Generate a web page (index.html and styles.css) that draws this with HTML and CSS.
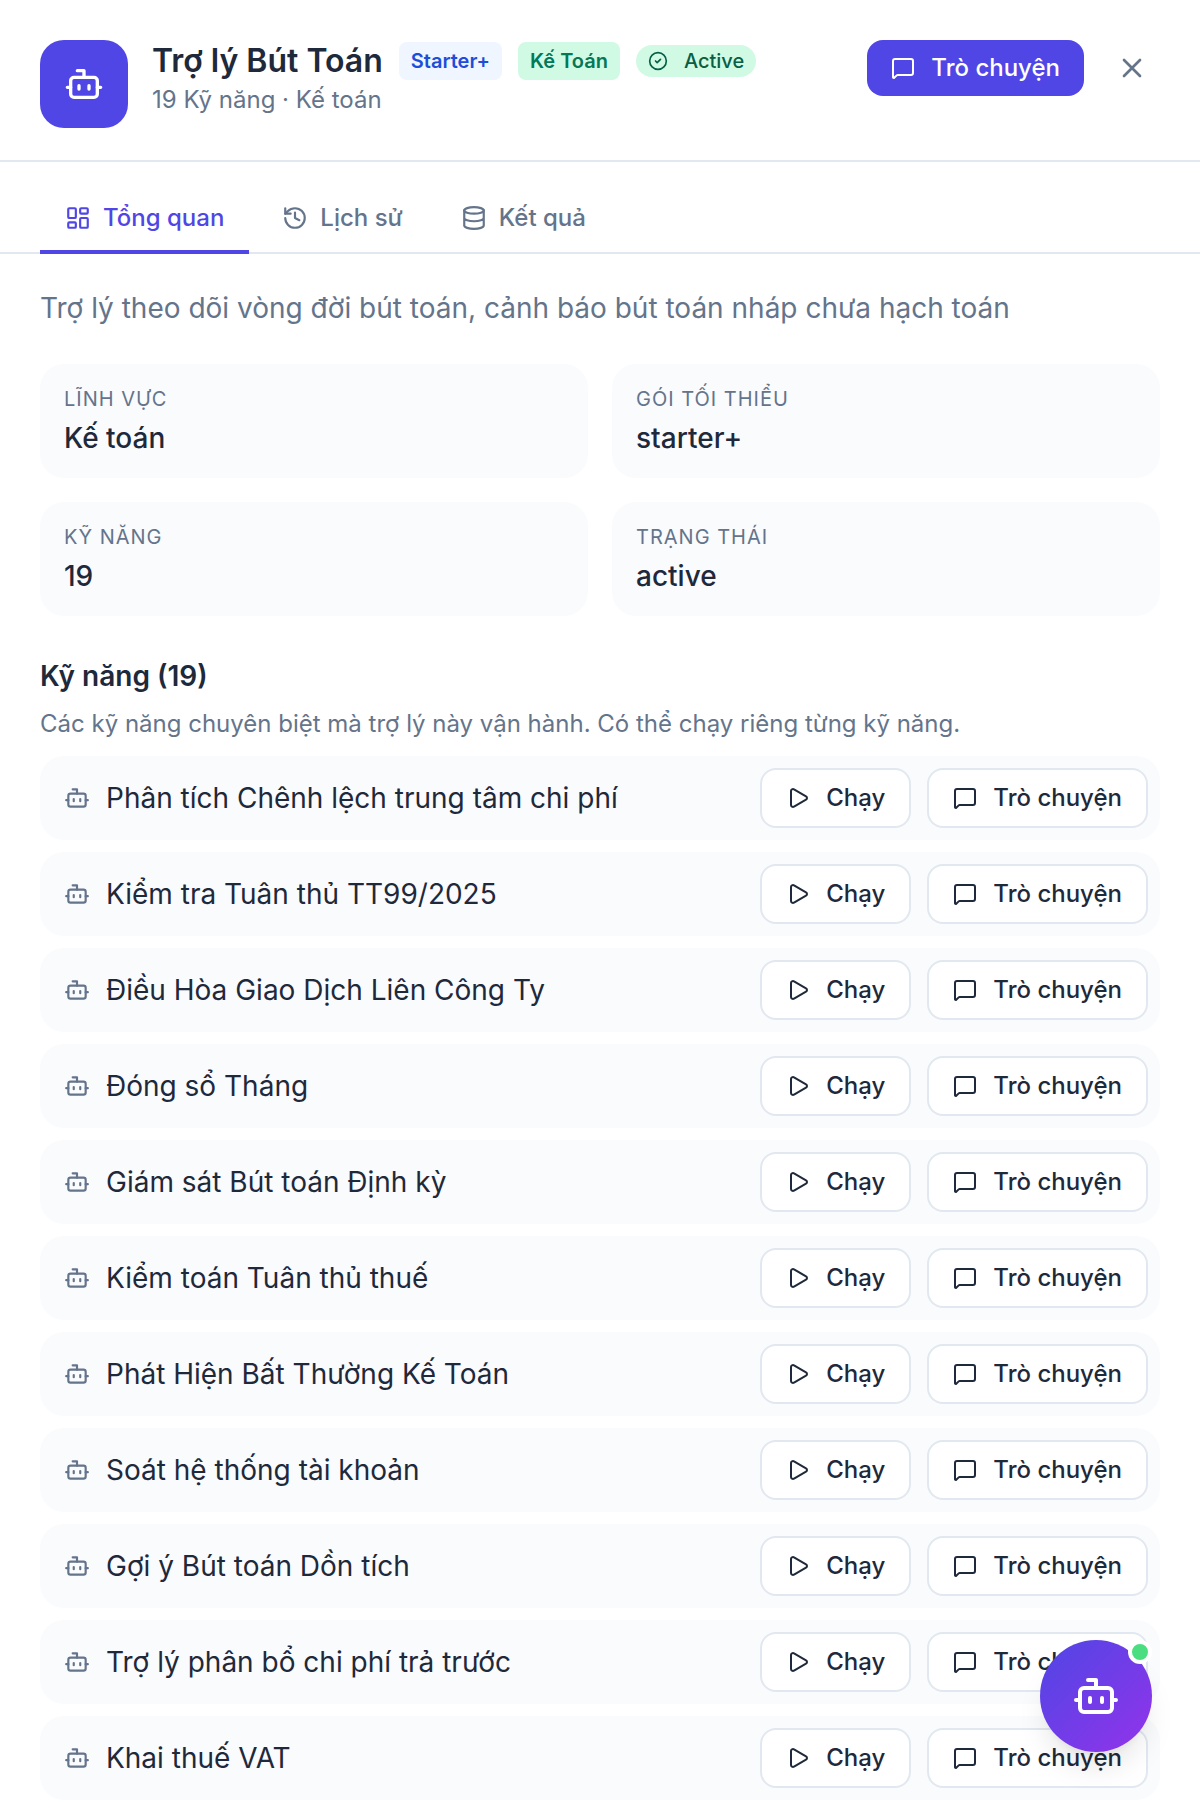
FILE: index.html
```html
<!DOCTYPE html>
<html lang="vi">
<head>
  <meta charset="UTF-8" />
  <meta name="viewport" content="width=device-width, initial-scale=1" />
  <title>Trợ lý Bút Toán</title>
  <link rel="stylesheet" href="styles.css">
</head>
<body>

<!-- Icon sprite -->
<svg class="sprite" aria-hidden="true">
  <symbol id="i-bot" viewBox="0 0 24 24"><path d="M12 8V4H8"/><rect width="16" height="12" x="4" y="8" rx="2"/><path d="M2 14h2M20 14h2M15 13v2M9 13v2"/></symbol>
  <symbol id="i-message" viewBox="0 0 24 24"><path d="M22 17a2 2 0 0 1-2 2H6.828a2 2 0 0 0-1.414.586l-2.202 2.202A.71.71 0 0 1 2 21.286V5a2 2 0 0 1 2-2h16a2 2 0 0 1 2 2z"/></symbol>
  <symbol id="i-play" viewBox="0 0 24 24"><path d="M5 5a2 2 0 0 1 3.008-1.728l11.997 6.998a2 2 0 0 1 .003 3.458l-12 7A2 2 0 0 1 5 19z"/></symbol>
  <symbol id="i-close" viewBox="0 0 24 24"><path d="M18 6 6 18M6 6l12 12"/></symbol>
  <symbol id="i-check" viewBox="0 0 24 24"><circle cx="12" cy="12" r="10"/><path d="m9 12 2 2 4-4"/></symbol>
  <symbol id="i-grid" viewBox="0 0 24 24"><rect width="7" height="9" x="3" y="3" rx="1"/><rect width="7" height="5" x="14" y="3" rx="1"/><rect width="7" height="9" x="14" y="12" rx="1"/><rect width="7" height="5" x="3" y="16" rx="1"/></symbol>
  <symbol id="i-history" viewBox="0 0 24 24"><path d="M3 12a9 9 0 1 0 9-9 9.75 9.75 0 0 0-6.74 2.74L3 8"/><path d="M3 3v5h5M12 7v5l4 2"/></symbol>
  <symbol id="i-db" viewBox="0 0 24 24"><ellipse cx="12" cy="5" rx="9" ry="3"/><path d="M3 5v14a9 3 0 0 0 18 0V5M3 12a9 3 0 0 0 18 0"/></symbol>
</svg>

<header class="header">
  <div class="avatar"><svg class="icon icon-lg"><use href="#i-bot"/></svg></div>
  <div class="heading">
    <div class="title-row">
      <h1>Trợ lý Bút Toán</h1>
      <span class="badge badge-blue">Starter+</span>
      <span class="badge badge-green">Kế Toán</span>
      <span class="status"><svg class="icon icon-xs"><use href="#i-check"/></svg>Active</span>
    </div>
    <p class="subtitle">19 Kỹ năng · Kế toán</p>
  </div>
  <button class="btn btn-primary"><svg class="icon icon-sm"><use href="#i-message"/></svg>Trò chuyện</button>
  <button class="close" aria-label="Đóng"><svg class="icon icon-md"><use href="#i-close"/></svg></button>
</header>

<nav class="tabs">
  <button class="tab active"><svg class="icon"><use href="#i-grid"/></svg>Tổng quan</button>
  <button class="tab"><svg class="icon"><use href="#i-history"/></svg>Lịch sử</button>
  <button class="tab"><svg class="icon"><use href="#i-db"/></svg>Kết quả</button>
</nav>

<main class="content">
  <p class="intro">Trợ lý theo dõi vòng đời bút toán, cảnh báo bút toán nháp chưa hạch toán</p>

  <dl class="cards">
    <div class="card"><dt>Lĩnh vực</dt><dd>Kế toán</dd></div>
    <div class="card"><dt>Gói tối thiểu</dt><dd>starter+</dd></div>
    <div class="card"><dt>Kỹ năng</dt><dd>19</dd></div>
    <div class="card"><dt>Trạng thái</dt><dd>active</dd></div>
  </dl>

  <h2>Kỹ năng (19)</h2>
  <p class="hint">Các kỹ năng chuyên biệt mà trợ lý này vận hành. Có thể chạy riêng từng kỹ năng.</p>

  <ul class="skills">
    <li class="skill">
      <svg class="icon"><use href="#i-bot"/></svg>
      <span class="name">Phân tích Chênh lệch trung tâm chi phí</span>
      <button class="btn"><svg class="icon icon-sm"><use href="#i-play"/></svg>Chạy</button>
      <button class="btn"><svg class="icon icon-sm"><use href="#i-message"/></svg>Trò chuyện</button>
    </li>
    <li class="skill">
      <svg class="icon"><use href="#i-bot"/></svg>
      <span class="name">Kiểm tra Tuân thủ TT99/2025</span>
      <button class="btn"><svg class="icon icon-sm"><use href="#i-play"/></svg>Chạy</button>
      <button class="btn"><svg class="icon icon-sm"><use href="#i-message"/></svg>Trò chuyện</button>
    </li>
    <li class="skill">
      <svg class="icon"><use href="#i-bot"/></svg>
      <span class="name">Điều Hòa Giao Dịch Liên Công Ty</span>
      <button class="btn"><svg class="icon icon-sm"><use href="#i-play"/></svg>Chạy</button>
      <button class="btn"><svg class="icon icon-sm"><use href="#i-message"/></svg>Trò chuyện</button>
    </li>
    <li class="skill">
      <svg class="icon"><use href="#i-bot"/></svg>
      <span class="name">Đóng sổ Tháng</span>
      <button class="btn"><svg class="icon icon-sm"><use href="#i-play"/></svg>Chạy</button>
      <button class="btn"><svg class="icon icon-sm"><use href="#i-message"/></svg>Trò chuyện</button>
    </li>
    <li class="skill">
      <svg class="icon"><use href="#i-bot"/></svg>
      <span class="name">Giám sát Bút toán Định kỳ</span>
      <button class="btn"><svg class="icon icon-sm"><use href="#i-play"/></svg>Chạy</button>
      <button class="btn"><svg class="icon icon-sm"><use href="#i-message"/></svg>Trò chuyện</button>
    </li>
    <li class="skill">
      <svg class="icon"><use href="#i-bot"/></svg>
      <span class="name">Kiểm toán Tuân thủ thuế</span>
      <button class="btn"><svg class="icon icon-sm"><use href="#i-play"/></svg>Chạy</button>
      <button class="btn"><svg class="icon icon-sm"><use href="#i-message"/></svg>Trò chuyện</button>
    </li>
    <li class="skill">
      <svg class="icon"><use href="#i-bot"/></svg>
      <span class="name">Phát Hiện Bất Thường Kế Toán</span>
      <button class="btn"><svg class="icon icon-sm"><use href="#i-play"/></svg>Chạy</button>
      <button class="btn"><svg class="icon icon-sm"><use href="#i-message"/></svg>Trò chuyện</button>
    </li>
    <li class="skill">
      <svg class="icon"><use href="#i-bot"/></svg>
      <span class="name">Soát hệ thống tài khoản</span>
      <button class="btn"><svg class="icon icon-sm"><use href="#i-play"/></svg>Chạy</button>
      <button class="btn"><svg class="icon icon-sm"><use href="#i-message"/></svg>Trò chuyện</button>
    </li>
    <li class="skill">
      <svg class="icon"><use href="#i-bot"/></svg>
      <span class="name">Gợi ý Bút toán Dồn tích</span>
      <button class="btn"><svg class="icon icon-sm"><use href="#i-play"/></svg>Chạy</button>
      <button class="btn"><svg class="icon icon-sm"><use href="#i-message"/></svg>Trò chuyện</button>
    </li>
    <li class="skill">
      <svg class="icon"><use href="#i-bot"/></svg>
      <span class="name">Trợ lý phân bổ chi phí trả trước</span>
      <button class="btn"><svg class="icon icon-sm"><use href="#i-play"/></svg>Chạy</button>
      <button class="btn"><svg class="icon icon-sm"><use href="#i-message"/></svg>Trò chuyện</button>
    </li>
    <li class="skill">
      <svg class="icon"><use href="#i-bot"/></svg>
      <span class="name">Khai thuế VAT</span>
      <button class="btn"><svg class="icon icon-sm"><use href="#i-play"/></svg>Chạy</button>
      <button class="btn"><svg class="icon icon-sm"><use href="#i-message"/></svg>Trò chuyện</button>
    </li>
  </ul>
</main>

<button class="fab" aria-label="Mở trợ lý">
  <svg class="icon icon-xl"><use href="#i-bot"/></svg>
  <span class="dot"></span>
</button>

</body>
</html>
```
FILE: styles.css
```css
* {
  box-sizing: border-box;
}
body {
  margin: 0;
  font-family: Inter, 'Noto Sans', sans-serif;
  font-size: 24px;
  line-height: 32px;
  background: #fff;
  color: #1e293b;
}
h1, h2, p, dl, dd, ul {
  margin: 0;
  padding: 0;
}
button {
  font: inherit;
  color: inherit;
  border: none;
  background: none;
  cursor: pointer;
}
.sprite {
  display: none;
}

/* Icons */
.icon {
  width: 26px;
  height: 26px;
  flex-shrink: 0;
  fill: none;
  stroke: currentColor;
  stroke-width: 2;
  stroke-linecap: round;
  stroke-linejoin: round;
}
.icon-xs {
  width: 20px;
  height: 20px;
}
.icon-sm {
  width: 24px;
  height: 24px;
}
.icon-md {
  width: 32px;
  height: 32px;
}
.icon-lg {
  width: 40px;
  height: 40px;
}
.icon-xl {
  width: 48px;
  height: 48px;
}

/* Header */
.header {
  display: flex;
  align-items: flex-start;
  padding: 40px 40px 32px;
  border-bottom: 2px solid #e2e8f0;
}
.avatar {
  display: flex;
  align-items: center;
  justify-content: center;
  width: 88px;
  height: 88px;
  margin-right: 24px;
  border-radius: 24px;
  background: #4f46e5;
  color: #fff;
}
.heading {
  flex: 1;
}
.title-row {
  display: flex;
  align-items: center;
  gap: 16px;
  height: 42px;
}
h1 {
  font-size: 32px;
  line-height: 40px;
  font-weight: 600;
}
.subtitle {
  line-height: 36px;
  color: #64748b;
}
.badge {
  padding: 5px 12px;
  border-radius: 8px;
  font-size: 20px;
  line-height: 28px;
  font-weight: 600;
}
.badge-blue {
  background: #eff6ff;
  color: #1d4ed8;
}
.badge-green {
  background: #d1fae5;
  color: #047857;
}
.status {
  display: flex;
  align-items: center;
  gap: 16px;
  padding: 2px 12px;
  border-radius: 16px;
  background: #d1fae5;
  color: #065f46;
  font-size: 20px;
  line-height: 28px;
  font-weight: 500;
}
.btn {
  display: flex;
  align-items: center;
  gap: 16px;
  height: 60px;
  padding: 0 24px;
  border: 2px solid #e2e8f0;
  border-radius: 16px;
  background: #fff;
  font-weight: 500;
}
.btn-primary {
  height: 56px;
  border: none;
  background: #4f46e5;
  color: #fff;
}
.close {
  display: flex;
  align-items: center;
  justify-content: center;
  width: 56px;
  height: 56px;
  margin-left: 20px;
  padding: 0;
  color: #64748b;
}

/* Tabs */
.tabs {
  display: flex;
  gap: 8px;
  padding: 24px 40px 0;
  border-bottom: 2px solid #e2e8f0;
}
.tab {
  display: flex;
  align-items: center;
  gap: 12px;
  margin-bottom: -2px;
  padding: 16px 25px;
  border-bottom: 4px solid transparent;
  font-weight: 500;
  color: #64748b;
}
.tab.active {
  border-color: #4f46e5;
  color: #4f46e5;
}

/* Overview */
.content {
  padding: 32px 40px 0;
}
.intro {
  margin-bottom: 34px;
  font-size: 28px;
  line-height: 44px;
  color: #64748b;
}
.cards {
  display: grid;
  grid-template-columns: 1fr 1fr;
  gap: 24px;
}
.card {
  padding: 20px 24px;
  border-radius: 24px;
  background: #fafbfd;
}
.card dt {
  margin-bottom: 4px;
  font-size: 20px;
  line-height: 30px;
  letter-spacing: 1px;
  text-transform: uppercase;
  color: #64748b;
}
.card dd {
  font-size: 28px;
  line-height: 40px;
  font-weight: 500;
}
h2 {
  margin: 40px 0 12px;
  font-size: 28px;
  line-height: 40px;
  font-weight: 600;
}
.hint {
  margin-bottom: 16px;
  color: #64748b;
}

/* Skill list */
.skills {
  display: flex;
  flex-direction: column;
  gap: 12px;
  list-style: none;
}
.skill {
  display: flex;
  align-items: center;
  gap: 16px;
  padding: 12px 12px 12px 24px;
  border-radius: 24px;
  background: #fafbfd;
}
.skill > .icon {
  color: #64748b;
}
.name {
  flex: 1;
  font-size: 28px;
}

/* Floating assistant button */
.fab {
  position: fixed;
  right: 48px;
  bottom: 48px;
  display: flex;
  align-items: center;
  justify-content: center;
  width: 112px;
  height: 112px;
  padding: 0;
  border-radius: 50%;
  background: linear-gradient(135deg, #4f46e5, #9333ea);
  box-shadow: 0 20px 30px -6px rgba(0, 0, 0, 0.1), 0 8px 12px -8px rgba(0, 0, 0, 0.1);
  color: #fff;
}
.dot {
  position: absolute;
  top: 0;
  right: 0;
  width: 24px;
  height: 24px;
  border: 4px solid #fff;
  border-radius: 50%;
  background: #4ade80;
}
```
